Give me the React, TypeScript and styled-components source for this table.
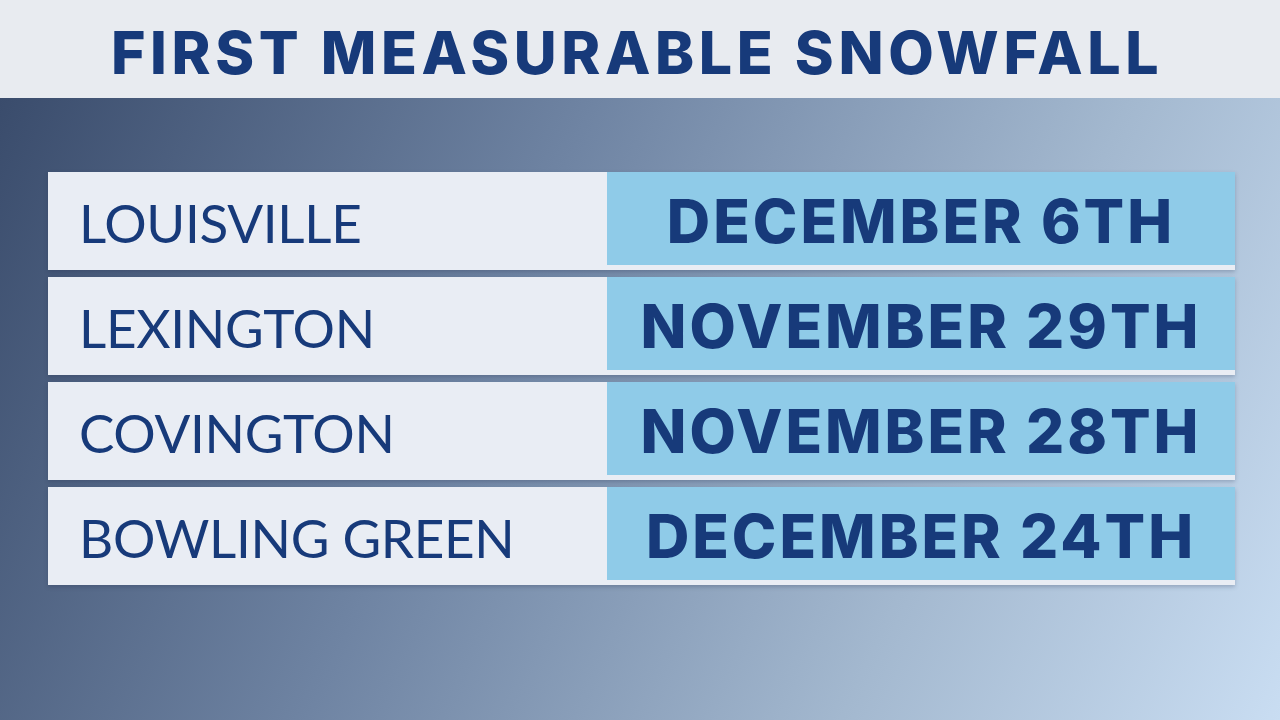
import styled, { createGlobalStyle } from 'styled-components';

const ROWS = [
  { city: 'LOUISVILLE', date: 'DECEMBER 6TH' },
  { city: 'LEXINGTON', date: 'NOVEMBER 29TH' },
  { city: 'COVINGTON', date: 'NOVEMBER 28TH' },
  { city: 'BOWLING GREEN', date: 'DECEMBER 24TH' },
];

const GlobalStyle = createGlobalStyle`
  html, body {
    margin: 0;
    padding: 0;
  }
  body {
    width: 1280px;
    height: 720px;
    overflow: hidden;
    font-family: 'Inter', 'Liberation Sans', sans-serif;
  }
`;

const App = () => {
  return (
    <Page>
      <GlobalStyle />
      <Header>
        <Title>FIRST MEASURABLE SNOWFALL</Title>
      </Header>
      <Board>
        <Table>
          {ROWS.map((row) => (
            <Row key={row.city}>
              <City>{row.city}</City>
              <DateCell>
                <DateText>{row.date}</DateText>
              </DateCell>
            </Row>
          ))}
        </Table>
      </Board>
    </Page>
  );
};

export default App;

const Page = styled.div`
  width: 1280px;
  height: 720px;
  display: flex;
  flex-direction: column;
`;

const Header = styled.header`
  height: 98px;
  flex: 0 0 98px;
  background: #e8ebf0;
  display: flex;
  align-items: center;
  justify-content: center;
`;

const Title = styled.h1`
  margin: 0;
  font-family: 'Inter', sans-serif;
  font-weight: 800;
  font-size: 59px;
  letter-spacing: 4.6px;
  color: #173a7a;
  line-height: 1;
  padding-top: 6px;
  padding-right: 6px;
`;

const Board = styled.main`
  flex: 1;
  background: linear-gradient(115deg, #3a4c6c 0%, #6f84a3 38%, #a3b8cf 72%, #c9ddf2 100%);
  padding: 74px 45px 0 48px;
`;

const Table = styled.div`
  display: flex;
  flex-direction: column;
  gap: 7px;
`;

const Row = styled.div`
  height: 98px;
  display: grid;
  grid-template-columns: 559px 1fr;
  background: #e9edf4;
  box-shadow: 0 2px 4px rgba(30, 45, 75, 0.25);
`;

const City = styled.div`
  display: flex;
  align-items: center;
  padding-left: 31px;
  padding-top: 2px;
  font-family: 'Lato', sans-serif;
  font-weight: 400;
  font-size: 53px;
  letter-spacing: -0.3px;
  color: #173a7a;
`;

const DateCell = styled.div`
  height: 93px;
  background: #8fcbe8;
  display: flex;
  align-items: center;
  justify-content: center;
`;

const DateText = styled.span`
  font-family: 'Inter', sans-serif;
  font-weight: 800;
  font-size: 60px;
  letter-spacing: 3px;
  color: #173a7a;
  line-height: 1;
  padding-top: 4px;
`;
